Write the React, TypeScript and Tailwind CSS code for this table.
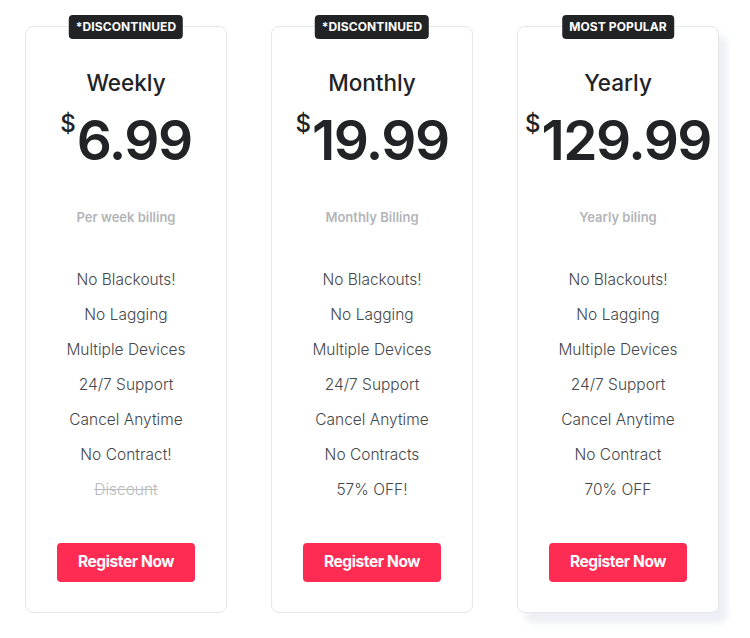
const plans = [
  {
    badge: '*DISCONTINUED',
    name: 'Weekly',
    price: '6.99',
    billing: 'Per week billing',
    features: ['No Blackouts!', 'No Lagging', 'Multiple Devices', '24/7 Support', 'Cancel Anytime', 'No Contract!'],
    last: 'Discount',
    struck: true,
    popular: false,
  },
  {
    badge: '*DISCONTINUED',
    name: 'Monthly',
    price: '19.99',
    billing: 'Monthly Billing',
    features: ['No Blackouts!', 'No Lagging', 'Multiple Devices', '24/7 Support', 'Cancel Anytime', 'No Contracts'],
    last: '57% OFF!',
    struck: false,
    popular: false,
  },
  {
    badge: 'MOST POPULAR',
    name: 'Yearly',
    price: '129.99',
    billing: 'Yearly biling',
    features: ['No Blackouts!', 'No Lagging', 'Multiple Devices', '24/7 Support', 'Cancel Anytime', 'No Contract'],
    last: '70% OFF',
    struck: false,
    popular: true,
  },
];

type Plan = (typeof plans)[number];

function PlanCard({ plan }: { plan: Plan }) {
  return (
    <div
      className={
        'relative flex w-[202px] h-[587px] flex-col items-center rounded-[8px] border border-[#e6e7ea] bg-white ' +
        (plan.popular ? 'shadow-[8px_10px_6px_rgba(220,226,234,0.55)]' : '')
      }
    >
      {/* badge sits over the top border */}
      <div className="absolute -top-[12px] left-1/2 -translate-x-1/2 rounded-[4px] bg-[#222325] px-[7px] h-[24px] flex items-center text-[12px] font-bold tracking-[0.1px] text-white whitespace-nowrap">
        {plan.badge}
      </div>

      <h2 className="mt-[41px] text-[22.5px] leading-[30px] font-medium text-[#222326]">{plan.name}</h2>

      <div className="mt-[14px] flex items-start text-[#222326]">
        <span className="mr-[1px] text-[24px] leading-none font-medium">$</span>
        <span className="text-[55px] leading-[56px] font-semibold tracking-[-1.5px]">{plan.price}</span>
      </div>

      <p className="mt-[40px] text-[13px] font-semibold text-[#b3b5b9]">{plan.billing}</p>

      <ul className="mt-[41px] flex flex-col items-center gap-[14px] text-[15.5px] leading-[21px] font-light text-[#45474b]">
        {plan.features.map((f) => (
          <li key={f}>{f}</li>
        ))}
        <li className={plan.struck ? 'line-through text-[#b8babd]' : ''}>{plan.last}</li>
      </ul>

      <button className="mt-[43px] w-[138px] h-[39px] rounded-[4px] bg-[#fe2c52] text-[15.5px] font-bold text-white tracking-[-0.4px]">
        Register Now
      </button>
    </div>
  );
}

export default function App() {
  return (
    <div className="w-[750px] h-[638px] bg-white font-['Inter',sans-serif]">
      <div className="flex gap-[44px] pl-[25px] pt-[26px]">
        {plans.map((p) => (
          <PlanCard key={p.name} plan={p} />
        ))}
      </div>
    </div>
  );
}
